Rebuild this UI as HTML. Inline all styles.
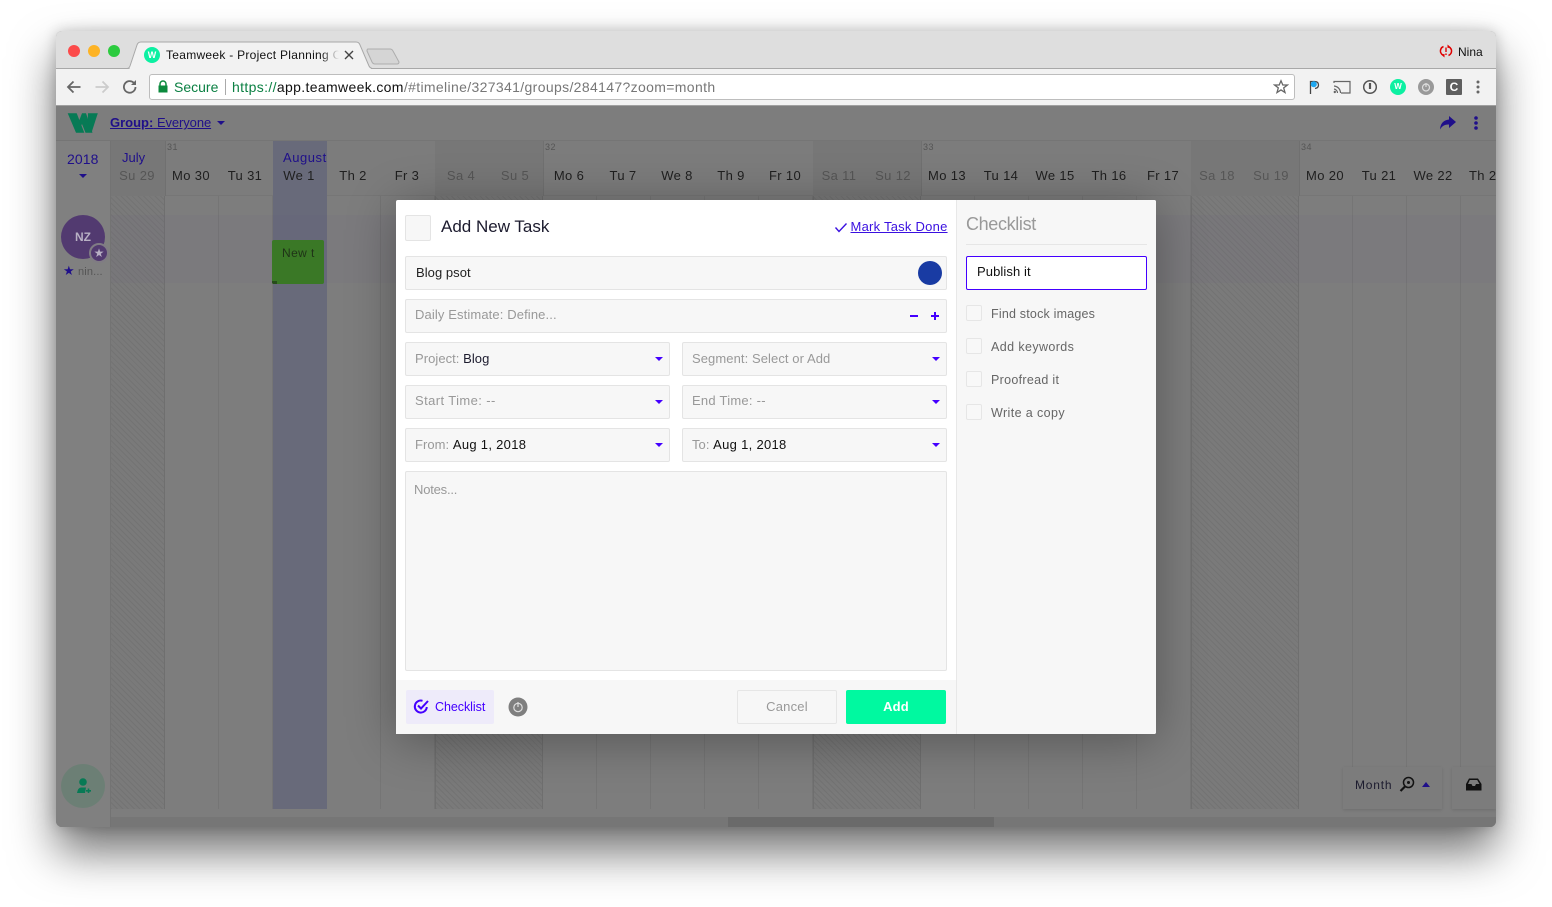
<!DOCTYPE html>
<html lang="en"><head><meta charset="utf-8"><title>Teamweek</title>
<style>
*{box-sizing:border-box}
html,body{margin:0;padding:0;width:1552px;height:907px;overflow:hidden;background:#fff;font-family:"Liberation Sans",sans-serif}
.a,.t{position:absolute}
.t{white-space:nowrap}
#win{position:absolute;left:56px;top:31px;width:1440px;height:796px;border-radius:6px;box-shadow:0 25px 45px rgba(0,0,0,.55),0 0 14px rgba(0,0,0,.2)}
#clip{position:absolute;left:56px;top:31px;width:1440px;height:796px;border-radius:6px;overflow:hidden;background:#7d7d7d}
.col{position:absolute;top:110px;height:613px;width:54px;border-right:1px solid #757575}
.hatch{background:repeating-linear-gradient(45deg,#737373 0,#737373 1px,#7a7a7a 1px,#7a7a7a 4px)}
.d{position:absolute;top:136px;width:54px;text-align:center;font-size:13px;line-height:18px;color:#1f1f1f;letter-spacing:.35px;white-space:nowrap}
.w{color:#565656}
.wk{position:absolute;top:111px;font-size:9px;color:#555;letter-spacing:.5px}
.f{position:absolute;background:#f7f7f7;border:1px solid #e4e4e4;border-radius:2px;height:34px}
.l{position:absolute;white-space:nowrap;font-size:13px;line-height:16px;color:#999;letter-spacing:.15px}
.v{color:#1c1b2e}
.car{position:absolute;width:0;height:0;border-left:4px solid transparent;border-right:4px solid transparent;border-top:4px solid #4400ff}
.cb{position:absolute;left:966px;width:16px;height:16px;border:1px solid #e6e6e6;border-radius:2px;background:#f8f8f8}
.ci{position:absolute;left:991px;font-size:12.5px;line-height:16px;color:#666;white-space:nowrap;letter-spacing:.22px}
</style></head><body>
<div id="win"></div>
<div id="clip">
<div class="a" style="left:0;top:0;width:1440px;height:38px;background:#dedede"></div>
<div class="a" style="left:0;top:37px;width:1440px;height:1px;background:#a8a8a8"></div>
<div class="a" style="left:0;top:38px;width:1440px;height:37px;background:#f2f2f2"></div>
<div class="a" style="left:0;top:74px;width:1440px;height:1px;background:#a0a0a0"></div>
<div class="a" style="left:12px;top:14px;width:12px;height:12px;border-radius:50%;background:#fc4b4b"></div>
<div class="a" style="left:32px;top:14px;width:12px;height:12px;border-radius:50%;background:#fdb325"></div>
<div class="a" style="left:52px;top:14px;width:12px;height:12px;border-radius:50%;background:#2ccb3f"></div>
<svg class="a" style="left:70px;top:9px" width="250" height="31"><path d="M0 28.500H1Q3 28.500 4 26L11 5Q12 2 15 2H230Q233 2 234 5L243 26Q244 28 246 28.500" fill="#f2f2f2" stroke="#a8a8a8"/><path d="M4 29.500H245" stroke="#f2f2f2" stroke-width="2"/></svg>
<svg class="a" style="left:310px;top:17px" width="36" height="17"><path d="M2 1H24Q26 1 27 3L33 14Q33 16 31 16H9Q7 16 6 14L1 3Q1 1 2 1Z" fill="#d5d5d5" stroke="#adadad"/></svg>
<div class="a" style="left:88px;top:16px;width:16px;height:16px;border-radius:50%;background:#0cf0a2;color:#fff;font:bold 9px/16px 'Liberation Sans',sans-serif;text-align:center">W</div>
<div class="t" style="left:110px;top:16px;width:173px;overflow:hidden;font-size:12px;line-height:16px;color:#111;letter-spacing:.28px;-webkit-mask-image:linear-gradient(90deg,#000 155px,transparent 173px)">Teamweek - Project Planning Calendar</div>
<svg class="a" style="left:288px;top:19px" width="10" height="10"><path d="M1 1L9 9M9 1L1 9" stroke="#444" stroke-width="1.400"/></svg>
<svg class="a" style="left:1383px;top:13px" width="14" height="14"><path d="M4.500 2.500Q1 4 1.500 8Q2 10 4 11" fill="none" stroke="#e00000" stroke-width="1.500"/><path d="M2 10.500L5.500 10V13.500Z" fill="#e00000"/><path d="M9.500 11.500Q13 10 12.500 6Q12 4 10 3" fill="none" stroke="#e00000" stroke-width="1.500"/><path d="M12 3.500L8.500 4V.5Z" fill="#e00000"/><path d="M7 3.500V8M7 9.500V11" stroke="#e00000" stroke-width="1.400"/></svg>
<div class="t" style="left:1402px;top:13px;font-size:12px;line-height:16px;color:#111">Nina</div>
<svg class="a" style="left:9px;top:47px" width="18" height="18"><path d="M15.500 9H3M8.500 3.500L3 9L8.500 14.500" fill="none" stroke="#666" stroke-width="1.800"/></svg>
<svg class="a" style="left:37px;top:47px" width="18" height="18"><path d="M2.500 9H15M9.500 3.500L15 9L9.500 14.500" fill="none" stroke="#ccc" stroke-width="1.800"/></svg>
<svg class="a" style="left:65px;top:47px" width="18" height="18"><path d="M14.500 9A5.800 5.800 0 1 1 12.800 4.800" fill="none" stroke="#666" stroke-width="1.800"/><path d="M15 2V7H10Z" fill="#666"/></svg>
<div class="a" style="left:93px;top:43px;width:1146px;height:26px;background:#fff;border:1px solid #bdbdbd;border-radius:3px"></div>
<svg class="a" style="left:101px;top:49px" width="12" height="13"><path d="M3 6V4A3 3 0 0 1 9 4V6" fill="none" stroke="#0b8a3c" stroke-width="1.500"/><rect x="1.500" y="5.500" width="9" height="7" fill="#0b8a3c"/></svg>
<div class="t" style="left:118px;top:48px;font-size:14px;line-height:16px;color:#0b8043">Secure</div>
<div class="a" style="left:169px;top:48px;width:1px;height:16px;background:#aaa"></div>
<div class="t" style="left:176px;top:48px;font-size:14px;line-height:16px;color:#777;letter-spacing:.35px"><span style="color:#0b8043">https://</span><span style="color:#111">app.teamweek.com</span>/#timeline/327341/groups/284147?zoom=month</div>
<svg class="a" style="left:1217px;top:48px" width="16" height="16"><path d="M8 1.800L9.800 6H14.400L10.700 8.900L12 13.500L8 10.900L4 13.500L5.300 8.900L1.600 6H6.200Z" fill="none" stroke="#666" stroke-width="1.300"/></svg>
<svg class="a" style="left:1251px;top:47px" width="14" height="18"><path d="M3.500 16V3.500H7.500Q11.500 3.500 11.500 7Q11.500 10 8 10.500" fill="none" stroke="#444" stroke-width="1.300"/><circle cx="6.800" cy="6.300" r="3" fill="#1da7f0"/></svg>
<svg class="a" style="left:1277px;top:48px" width="18" height="16"><path d="M1 4V2.500H17V14H8" fill="none" stroke="#666" stroke-width="1.200"/><path d="M1 7A7 7 0 0 1 7.500 14M1 10A4 4 0 0 1 4.500 14" fill="none" stroke="#666" stroke-width="1.200"/><circle cx="1.800" cy="13" r="1.200" fill="#666"/></svg>
<svg class="a" style="left:1306px;top:48px" width="16" height="16"><circle cx="8" cy="8" r="6.300" fill="none" stroke="#555" stroke-width="1.500"/><path d="M8 4V10" stroke="#555" stroke-width="2.200"/></svg>
<div class="a" style="left:1334px;top:48px;width:16px;height:16px;border-radius:50%;background:#0cf0a2;color:#fff;font:bold 8px/16px 'Liberation Sans',sans-serif;text-align:center">W</div>
<svg class="a" style="left:1362px;top:48px" width="16" height="16"><circle cx="8" cy="8" r="8" fill="#999"/><circle cx="8" cy="8.500" r="3.500" fill="none" stroke="#ddd" stroke-width="1.200"/><path d="M8 4V8" stroke="#ddd" stroke-width="1.200"/></svg>
<div class="a" style="left:1390px;top:48px;width:16px;height:16px;border-radius:1px;background:#5f5f5f;color:#fff;font:bold 12px/16px 'Liberation Sans',sans-serif;text-align:center">C</div>
<svg class="a" style="left:1420px;top:48px" width="4" height="16"><circle cx="2" cy="3" r="1.500" fill="#666"/><circle cx="2" cy="8" r="1.500" fill="#666"/><circle cx="2" cy="13" r="1.500" fill="#666"/></svg>

<div class="a" style="left:0;top:75px;width:1440px;height:721px;background:#7d7d7d"></div>
<svg class="a" style="left:11px;top:81px" width="32" height="22"><path d="M.7 1.300H9.700L17.300 20.700H9Z" fill="#077a55"/><path d="M12 9L15 1.300H19L25.500 20.700H18.500L15 12L14 14Z" fill="#077a55"/><path d="M21 1.300H30.800L24.500 20.700L20.800 9Z" fill="#077a55"/></svg>
<div class="t" style="left:54px;top:84px;font-size:13px;line-height:16px;color:#1f0f8a;text-decoration:underline"><b>Group:</b> <span style="font-weight:normal;letter-spacing:-.1px">Everyone</span></div>
<div class="car" style="left:161px;top:90px;border-top-color:#1f0f8a"></div>
<svg class="a" style="left:1383px;top:84px" width="18" height="16"><path d="M10 1L17 7L10 13V9.500Q4 9 1 14.500Q1.500 5.500 10 4.500Z" fill="#1f0f8a"/></svg>
<svg class="a" style="left:1418px;top:84px" width="4" height="16"><circle cx="2" cy="3" r="1.800" fill="#1f0f8a"/><circle cx="2" cy="8" r="1.800" fill="#1f0f8a"/><circle cx="2" cy="13" r="1.800" fill="#1f0f8a"/></svg>
<div class="a" style="left:0;top:109px;width:1440px;height:1px;background:#757575"></div>

<div class="a" style="left:0;top:110px;width:55px;height:686px;background:#808080;border-right:1px solid #737373"></div>
<div class="a" style="left:55px;top:110px;width:1385px;height:55px;background:#7c7c7c;border-bottom:1px solid #767676"></div>
<div class="a hatch" style="left:55px;top:165px;width:54px;height:613px;border-right:1px solid #6f6f6f"></div>
<div class="a" style="left:217px;top:110px;width:54px;height:668px;background:#686a7a"></div>
<div class="col" style="left:109px;top:165px"></div><div class="col" style="left:163px;top:165px"></div>
<div class="col" style="left:271px;top:165px"></div><div class="col" style="left:325px;top:165px"></div>
<div class="a hatch" style="left:379px;top:165px;width:108px;height:613px;border-left:1px solid #6f6f6f;border-right:1px solid #6f6f6f"></div>
<div class="col" style="left:487px;top:165px"></div><div class="col" style="left:541px;top:165px"></div><div class="col" style="left:595px;top:165px"></div><div class="col" style="left:649px;top:165px"></div><div class="col" style="left:703px;top:165px"></div>
<div class="a hatch" style="left:757px;top:165px;width:108px;height:613px;border-left:1px solid #6f6f6f;border-right:1px solid #6f6f6f"></div>
<div class="col" style="left:865px;top:165px"></div><div class="col" style="left:919px;top:165px"></div><div class="col" style="left:973px;top:165px"></div><div class="col" style="left:1027px;top:165px"></div><div class="col" style="left:1081px;top:165px"></div>
<div class="a hatch" style="left:1135px;top:165px;width:108px;height:613px;border-left:1px solid #6f6f6f;border-right:1px solid #6f6f6f"></div>
<div class="col" style="left:1243px;top:165px"></div><div class="col" style="left:1297px;top:165px"></div><div class="col" style="left:1351px;top:165px"></div>
<div class="a" style="left:55px;top:184px;width:1385px;height:68px;background:rgba(100,95,125,.08)"></div>
<div class="a" style="left:379px;top:110px;width:108px;height:55px;background:#777"></div>
<div class="a" style="left:757px;top:110px;width:108px;height:55px;background:#777"></div>
<div class="a" style="left:1135px;top:110px;width:108px;height:55px;background:#777"></div>
<div class="a" style="left:55px;top:110px;width:54px;height:55px;background:#777"></div>
<div class="a" style="left:109px;top:110px;width:1px;height:55px;background:#707070"></div>
<div class="a" style="left:487px;top:110px;width:1px;height:55px;background:#707070"></div>
<div class="a" style="left:865px;top:110px;width:1px;height:55px;background:#707070"></div>
<div class="a" style="left:1243px;top:110px;width:1px;height:55px;background:#707070"></div>

<div class="t" style="left:11px;top:120px;font-size:14px;line-height:16px;color:#1f0f8a;letter-spacing:.1px">2018</div>
<div class="car" style="left:23px;top:143px;border-top-color:#1f0f8a"></div>
<div class="t" style="left:66px;top:119px;font-size:13px;line-height:16px;color:#1f0f8a">July</div>
<div class="t" style="left:227px;top:119px;font-size:13px;line-height:16px;color:#1f0f8a;letter-spacing:.55px">August</div>
<div class="wk" style="left:111px">31</div><div class="wk" style="left:489px">32</div><div class="wk" style="left:867px">33</div><div class="wk" style="left:1245px">34</div>
<div class="d w" style="left:54px">Su 29</div><div class="d" style="left:108px">Mo 30</div><div class="d" style="left:162px">Tu 31</div><div class="d" style="left:216px">We 1</div><div class="d" style="left:270px">Th 2</div><div class="d" style="left:324px">Fr 3</div><div class="d w" style="left:378px">Sa 4</div><div class="d w" style="left:432px">Su 5</div><div class="d" style="left:486px">Mo 6</div><div class="d" style="left:540px">Tu 7</div><div class="d" style="left:594px">We 8</div><div class="d" style="left:648px">Th 9</div><div class="d" style="left:702px">Fr 10</div><div class="d w" style="left:756px">Sa 11</div><div class="d w" style="left:810px">Su 12</div><div class="d" style="left:864px">Mo 13</div><div class="d" style="left:918px">Tu 14</div><div class="d" style="left:972px">We 15</div><div class="d" style="left:1026px">Th 16</div><div class="d" style="left:1080px">Fr 17</div><div class="d w" style="left:1134px">Sa 18</div><div class="d w" style="left:1188px">Su 19</div><div class="d" style="left:1242px">Mo 20</div><div class="d" style="left:1296px">Tu 21</div><div class="d" style="left:1350px">We 22</div><div class="t" style="left:1413px;top:136px;font-size:13px;line-height:18px;color:#1f1f1f;letter-spacing:.35px">Th 23</div>

<div class="a" style="left:5px;top:184px;width:44px;height:44px;border-radius:50%;background:#523a70;color:#b8b0c4;font:bold 12px/44px 'Liberation Sans',sans-serif;text-align:center">NZ</div>
<div class="a" style="left:33px;top:212px;width:20px;height:20px;border-radius:50%;background:#523a70;border:2px solid #807c84;color:#b8b0c4;font-size:12px;line-height:16px;text-align:center">★</div>
<div class="t" style="left:7px;top:233px;font-size:11px;line-height:14px;color:#555;letter-spacing:.15px"><span style="color:#1f0f8a;font-size:13px">★</span> nin...</div>
<div class="a" style="left:216px;top:209px;width:52px;height:44px;background:#3a7826;border-radius:2px;overflow:hidden"><span class="t" style="left:10px;top:5px;font-size:12px;line-height:16px;color:#1f3317;letter-spacing:.4px">New t</span><span class="a" style="left:0;bottom:0;width:5px;height:3px;background:#274d1b"></span></div>

<div class="a" style="left:5px;top:733px;width:44px;height:44px;border-radius:50%;background:#6c7f75"></div>
<svg class="a" style="left:19px;top:746px" width="18" height="18"><circle cx="8" cy="5" r="3.800" fill="#077a55"/><path d="M2 16Q3 10.500 6 10.500H11L10 16Z" fill="#077a55"/><path d="M13.500 11.500V16M11 13.800H16" stroke="#077a55" stroke-width="1.600"/></svg>

<div class="a" style="left:55px;top:786px;width:1385px;height:10px;background:#767676"></div>
<div class="a" style="left:672px;top:786px;width:266px;height:10px;background:#6a6a6a"></div>
<div class="a" style="left:1287px;top:736px;width:99px;height:42px;background:#7c7c7c;box-shadow:0 1px 3px rgba(0,0,0,.12)"></div>
<div class="t" style="left:1299px;top:746px;font-size:12px;line-height:16px;color:#1c1b2e;letter-spacing:.8px">Month</div>
<svg class="a" style="left:1343px;top:745px" width="16" height="17"><circle cx="9.500" cy="6.500" r="5" fill="none" stroke="#111" stroke-width="1.500"/><circle cx="9.500" cy="6.500" r="1.500" fill="#111"/><path d="M6 10.500L1.500 15" stroke="#111" stroke-width="2.200"/></svg>
<div class="a" style="left:1366px;top:751px;width:0;height:0;border-left:4.500px solid transparent;border-right:4.500px solid transparent;border-bottom:5px solid #1f0f8a"></div>
<div class="a" style="left:1396px;top:736px;width:44px;height:42px;background:#7c7c7c;box-shadow:0 1px 3px rgba(0,0,0,.12)"></div>
<svg class="a" style="left:1409px;top:746px" width="18" height="16"><path d="M4 1.500H13L16.500 7V13.500H1V7Z" fill="#111"/><path d="M4.800 3H12.200L14.500 7H11L10 9H7.500L6.500 7H3Z" fill="#7c7c7c"/></svg>
</div>

<div class="a" style="left:396px;top:200px;width:760px;height:534px;background:#fff;border-radius:2px;box-shadow:0 6px 50px rgba(0,0,0,.32)"></div>
<div class="a" style="left:956px;top:200px;width:200px;height:534px;background:#f7f7f7;border-left:1px solid #e8e8e8;border-radius:0 2px 2px 0"></div>
<div class="a" style="left:396px;top:680px;width:560px;height:54px;background:#f7f7f7"></div>

<div class="a" style="left:405px;top:215px;width:26px;height:26px;background:#f7f7f7;border:1px solid #e4e4e4;border-radius:2px"></div>
<div class="t" style="left:441px;top:216px;font-size:17px;line-height:21px;color:#1c1b2e;letter-spacing:.0px">Add New Task</div>
<svg class="a" style="left:834px;top:222px" width="14" height="11"><path d="M1.500 5.500L5 9.500L12.500 1.500" fill="none" stroke="#3a10e0" stroke-width="1.400"/></svg>
<div class="t" style="left:850.500px;top:219px;font-size:13px;line-height:16px;color:#3a10e0;text-decoration:underline;letter-spacing:.24px">Mark Task Done</div>

<div class="f" style="left:405px;top:256px;width:542px"></div>
<div class="l v" style="left:416px;top:265px;color:#222;letter-spacing:.05px">Blog psot</div>
<div class="a" style="left:918px;top:261px;width:24px;height:24px;border-radius:50%;background:#193ba3"></div>
<div class="f" style="left:405px;top:299px;width:542px"></div>
<div class="l" style="left:415px;top:307px;letter-spacing:.12px">Daily Estimate: Define...</div>
<div class="a" style="left:910px;top:315px;width:8px;height:2px;background:#4400ff"></div>
<div class="a" style="left:931px;top:315px;width:8px;height:2px;background:#4400ff"></div><div class="a" style="left:934px;top:312px;width:2px;height:8px;background:#4400ff"></div>

<div class="f" style="left:405px;top:342px;width:265px"></div><div class="l" style="left:415px;top:351px;letter-spacing:.05px">Project: <span class="v">Blog</span></div><div class="car" style="left:655px;top:357px"></div>
<div class="f" style="left:682px;top:342px;width:265px"></div><div class="l" style="left:692px;top:351px;letter-spacing:.08px">Segment: Select or Add</div><div class="car" style="left:932px;top:357px"></div>
<div class="f" style="left:405px;top:385px;width:265px"></div><div class="l" style="left:415px;top:393px;letter-spacing:.4px">Start Time: --</div><div class="car" style="left:655px;top:400px"></div>
<div class="f" style="left:682px;top:385px;width:265px"></div><div class="l" style="left:692px;top:393px;letter-spacing:.25px">End Time: --</div><div class="car" style="left:932px;top:400px"></div>
<div class="f" style="left:405px;top:428px;width:265px"></div><div class="l" style="left:415px;top:437px;letter-spacing:.05px">From: <span style="color:#111;letter-spacing:.3px">Aug 1, 2018</span></div><div class="car" style="left:655px;top:443px"></div>
<div class="f" style="left:682px;top:428px;width:265px"></div><div class="l" style="left:692px;top:437px;letter-spacing:.05px">To: <span style="color:#111;letter-spacing:.3px">Aug 1, 2018</span></div><div class="car" style="left:932px;top:443px"></div>
<div class="f" style="left:405px;top:471px;width:542px;height:200px"></div><div class="l" style="left:414px;top:482px;letter-spacing:-.2px">Notes...</div>

<div class="a" style="left:406px;top:690px;width:88px;height:34px;background:#eeebfa;border-radius:2px"></div>
<svg class="a" style="left:413px;top:698px" width="17" height="17"><path d="M13.800 9A6 6 0 1 1 9.500 2.800" fill="none" stroke="#4400ff" stroke-width="2"/><path d="M5 7.500L8 10.500L15 3" fill="none" stroke="#4400ff" stroke-width="2"/></svg>
<div class="t" style="left:435px;top:699px;font-size:12.500px;line-height:16px;color:#4400ff;letter-spacing:-.05px">Checklist</div>
<svg class="a" style="left:508px;top:697px" width="20" height="20"><circle cx="10" cy="10" r="9.500" fill="#7f7f7f"/><circle cx="10" cy="10.500" r="4.200" fill="none" stroke="#ddd" stroke-width="1.200"/><path d="M10 5V10" stroke="#ddd" stroke-width="1.200"/></svg>
<div class="a" style="left:737px;top:690px;width:100px;height:34px;border:1px solid #e6e6e6;border-radius:2px;font-size:13px;line-height:31px;text-align:center;color:#999;letter-spacing:.2px">Cancel</div>
<div class="a" style="left:846px;top:690px;width:100px;height:34px;background:#00f9a0;border-radius:2px;font-size:13px;font-weight:bold;line-height:34px;text-align:center;color:#fff;letter-spacing:.2px">Add</div>

<div class="t" style="left:966px;top:213px;font-size:18px;line-height:22px;color:#999;letter-spacing:-.35px">Checklist</div>
<div class="a" style="left:966px;top:244px;width:181px;height:1px;background:#e6e6e6"></div>
<div class="a" style="left:966px;top:256px;width:181px;height:34px;background:#fff;border:1px solid #4400ff;border-radius:2px"></div>
<div class="t" style="left:977px;top:264px;font-size:13px;line-height:16px;color:#111;letter-spacing:.1px">Publish it</div>
<div class="cb" style="top:305px"></div><div class="ci" style="top:306px;letter-spacing:.2px">Find stock images</div>
<div class="cb" style="top:338px"></div><div class="ci" style="top:339px;letter-spacing:.4px">Add keywords</div>
<div class="cb" style="top:371px"></div><div class="ci" style="top:372px;letter-spacing:.3px">Proofread it</div>
<div class="cb" style="top:404px"></div><div class="ci" style="top:405px;letter-spacing:.4px">Write a copy</div>
</body></html>
